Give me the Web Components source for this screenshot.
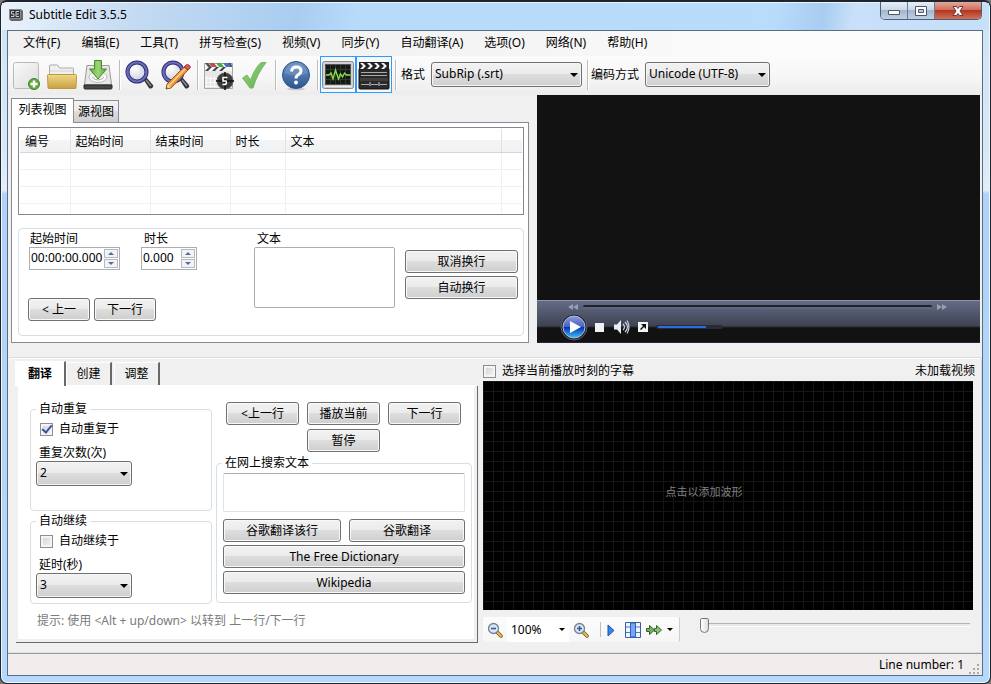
<!DOCTYPE html>
<html lang="zh-CN">
<head>
<meta charset="utf-8">
<title>Subtitle Edit 3.5.5</title>
<style>
*{box-sizing:border-box}
html{background:#777}
body{margin:0;min-height:100vh;display:flex;font:12px/16px "Noto Sans","Noto Sans CJK SC",sans-serif;color:#000}
se-window{flex:1}
.top{display:grid;grid-template-columns:minmax(0,518fr) minmax(0,443fr);column-gap:8px;padding:0 2px 14px 3px;height:262px}
.top se-tabs{margin-top:3px}
.bottom{flex:1;display:grid;grid-template-columns:minmax(0,463fr) minmax(0,490fr);column-gap:5px;padding:3px 8px 9px 7px;border:1px solid #d5dfe5;border-width:1px 1px 1px 0;border-radius:3px;box-shadow:inset 0 1px #fff}
.listpage{padding:4px 4px 6px 6px;display:flex;flex-direction:column;height:100%}
.listpage se-list{margin-bottom:13px}
.listpage se-group{flex:1}
.edit{display:grid;grid-template-columns:216px minmax(0,1fr) 113px;column-gap:10px;padding:2px 5px 14px 9px;height:100%}
.timing{display:flex;flex-direction:column;justify-content:space-between}
.spins{display:flex;gap:21px;padding-left:1px}
.spins se-spin:first-child{width:91px}
.spins se-spin:last-child{width:56px}
.pair{display:flex;gap:4px}
.pair se-button{width:62px}
.wraps{display:flex;flex-direction:column;gap:3px;padding-top:19px}
.translate{display:grid;grid-template-columns:182px minmax(0,1fr);column-gap:4px;padding:14px 2px 0 12px}
.auto{display:flex;flex-direction:column;gap:2px}
.auto se-group:first-child{height:110px}
.auto se-group:last-child{height:91px}
.opts{display:flex;flex-direction:column;padding:4px 5px}
.opts se-check{padding-left:4px;margin-bottom:8px}
.opts se-select{width:96px}
.play{display:grid;grid-template-columns:repeat(3,73px);column-gap:8px;row-gap:4px;padding:1px 0 0 10px;margin-bottom:3px}
.play se-button:last-child{grid-column:2}
.play,.web{min-width:0}
.web{display:grid;grid-template-columns:118fr 116fr;gap:3px 8px;padding:2px 6px 8px 6px}
.web se-memo{grid-column:1/-1;margin-bottom:4px}
.web .wide{grid-column:1/-1}
.hint{grid-column:1/-1;color:#7b7b7b;padding:9px 0 0 7px}
.wave{display:flex;flex-direction:column}
.wavehead{display:flex;justify-content:space-between;height:20px;align-items:center;margin-right:-2px}
.wave se-waveform{flex:1}
.waveside{display:flex;align-items:flex-start;height:33px;padding-top:7px}
</style>
</head>
<body>
<se-window caption="Subtitle Edit 3.5.5">
  <se-menu items="文件(F)|编辑(E)|工具(T)|拼写检查(S)|视频(V)|同步(Y)|自动翻译(A)|选项(O)|网络(N)|帮助(H)"></se-menu>
  <se-toolbar></se-toolbar>
  <div class="top">
    <se-tabs kind="framed" tabs="列表视图|源视图">
      <div class="listpage">
        <se-list columns="编号|起始时间|结束时间|时长|文本"></se-list>
        <se-group>
          <div class="edit">
            <div class="timing">
              <div class="spins">
                <se-spin label="起始时间" value="00:00:00.000"></se-spin>
                <se-spin label="时长" value="0.000"></se-spin>
              </div>
              <div class="pair"><se-button>&lt; 上一</se-button><se-button>下一行</se-button></div>
            </div>
            <se-memo label="文本" rows="3"></se-memo>
            <div class="wraps"><se-button>取消换行</se-button><se-button>自动换行</se-button></div>
          </div>
        </se-group>
      </div>
    </se-tabs>
    <se-player></se-player>
  </div>
  <div class="bottom">
    <se-tabs kind="raised" tabs="翻译|创建|调整">
      <div class="translate">
        <div class="auto">
          <se-group caption="自动重复"><div class="opts">
            <se-check label="自动重复于" checked></se-check>
            <se-select label="重复次数(次)" options="2" stacked></se-select>
          </div></se-group>
          <se-group caption="自动继续"><div class="opts">
            <se-check label="自动继续于"></se-check>
            <se-select label="延时(秒)" options="3" stacked></se-select>
          </div></se-group>
        </div>
        <div>
          <div class="play"><se-button>&lt;上一行</se-button><se-button>播放当前</se-button><se-button>下一行</se-button><se-button>暂停</se-button></div>
          <se-group caption="在网上搜索文本"><div class="web">
            <se-memo name="在网上搜索文本" light></se-memo>
            <se-button>谷歌翻译该行</se-button><se-button>谷歌翻译</se-button>
            <se-button class="wide">The Free Dictionary</se-button>
            <se-button class="wide">Wikipedia</se-button>
          </div></se-group>
        </div>
        <div class="hint">提示: 使用 &lt;Alt + up/down&gt; 以转到 上一行/下一行</div>
      </div>
    </se-tabs>
    <div class="wave">
      <div class="wavehead"><se-check label="选择当前播放时刻的字幕"></se-check><span>未加载视频</span></div>
      <se-waveform>点击以添加波形</se-waveform>
      <div class="waveside"><se-zoombar></se-zoombar><se-slider></se-slider></div>
    </div>
  </div>
  <se-status>Line number: 1</se-status>
</se-window>

<script>
const BASE = '*{box-sizing:border-box}button,input,select,textarea{font:inherit;color:inherit;margin:0}';
const define = (name, css, html) => customElements.define(name, class extends HTMLElement {
  constructor() { super(); this.attachShadow({ mode: 'open' }); }
  connectedCallback() {
    if (this.shadowRoot.childNodes.length) return;
    this.shadowRoot.innerHTML = `<style>${BASE}${css}</style>` + (typeof html === 'function' ? html(this) : html);
  }
});
const list = (el, name) => (el.getAttribute(name) || '').split('|');
const attr = (el, name) => el.getAttribute(name) || '';

const lens = `<defs><radialGradient id="l" cx=".4" cy=".35"><stop offset="0" stop-color="#fff"/><stop offset="1" stop-color="#d3dae4"/></radialGradient></defs>
<path d="M19 20l3-2 7 8q1 2-1 3t-3 0z" fill="#353539"/><path d="M22 21l5 6" stroke="#8a8a92" stroke-width="1.500"/>
<circle cx="13" cy="13" r="9.500" fill="url(#l)" stroke="#2c2c6c" stroke-width="4"/><circle cx="13" cy="13" r="9.500" fill="none" stroke="#6a6abf" stroke-width="2.200"/><path d="M7 12q1-5 6-5" fill="none" stroke="#fff" stroke-width="2"/>`;
const smallLens = sign => `<path d="M10 10l4 4" stroke="#715414" stroke-width="3.5" stroke-linecap="round"/><path d="M10.500 10.500l3.500 3.500" stroke="#efbf4e" stroke-width="2" stroke-linecap="round"/><circle cx="6.500" cy="6.500" r="5" fill="#d3e7fd" stroke="#788190" stroke-width="1.300"/><path d="${sign}" stroke="#40598e" stroke-width="1.600"/>`;
const ICONS = {
  app: [16, `<path d="M1 2h12l2 2v9l-3 1H3l-2-2z" fill="#66676b"/><path d="M1.500 2.500h11v9h-11z" fill="#34353a" stroke="#8a8a8a"/><path d="M6 4.500H3.500V7H6v2.500H3M11 4.500H8v5h3M8 7h3" fill="none" stroke="#ccc"/>`],
  new: [32, `<defs><linearGradient id="g" x1="0" y1="0" x2="1" y2="1"><stop offset="0" stop-color="#fafafa"/><stop offset="1" stop-color="#dcdcdc"/></linearGradient></defs>
   <rect x="3.500" y="3.500" width="25" height="26" rx="2" fill="url(#g)" stroke="#b9b9b9"/><circle cx="24" cy="25" r="5.500" fill="#62aa3e" stroke="#3f842b"/><path d="M24 21.500v7M20.500 25h7" stroke="#fff" stroke-width="2.500"/>`],
  open: [32, `<defs><linearGradient id="g" x1="0" y1="0" x2="0" y2="1"><stop offset="0" stop-color="#f0d988"/><stop offset="1" stop-color="#c9a040"/></linearGradient></defs>
   <path d="M3.500 29V7q0-1 1-1h7l2 3h13q1 0 1 1v19z" fill="#f0f0f0" stroke="#aaa"/><path d="M4 12h23" stroke="#d4d4d4"/><path d="M1.500 16.500q0-1 1-1h27q1 0 1 1L30 28.500q0 1-1 1H3q-1 0-1-1z" fill="url(#g)" stroke="#bd9741"/>`],
  save: [32, `<defs><linearGradient id="g" x1="0" y1="0" x2="1" y2="0"><stop offset="0" stop-color="#62ad44"/><stop offset=".5" stop-color="#9ad573"/><stop offset="1" stop-color="#62ad44"/></linearGradient></defs>
   <path d="M5 6.500h22l2.500 19h-27z" fill="#e8e8e8" stroke="#9a9a9a"/><path d="M2 26h28v3q0 1-1 1H3q-1 0-1-1z" fill="#44474a" stroke="#28292b"/><ellipse cx="16" cy="18" rx="9" ry="5.500" fill="#f8f8f8" stroke="#bbb"/><path d="M10 18q6 6 12 0" fill="none" stroke="#aaa"/><path d="M12.500 1.500h7V10h5L16 20 7.500 10h5z" fill="url(#g)" stroke="#438a2c"/>`],
  find: [32, lens],
  replace: [32, lens + `<path d="M24 8l4 3L11 29l-5 1 1-5z" fill="#ee963a" stroke="#9d5a1c"/><path d="M9.500 26L25.500 9.500" stroke="#ffd48e" stroke-width="1.500"/><path d="M24 8l2-2q2-1 3.500.500T30 9l-2 2z" fill="#d95a5a" stroke="#a33"/><path d="M8 25l3 3-5 2z" fill="#eed7ab"/><path d="M6 30l.700-2 1.200 1.300z" fill="#222"/>`],
  fix: [32, `<path d="M2.500 4.500h28v25h-28z" fill="#e6e6e6" stroke="#a6a6a6"/><path d="M3 5h27v7H3z" fill="#f5f5f5"/><path d="M3 4h3l4 4H6zM25 4h4l1 3v1h-2z" fill="#555"/><path d="M7 4h5l3 4h-5z" fill="#c44950"/><path d="M14 4h5l3 4h-5z" fill="#4aa34d"/><path d="M21 4h5l3 4h-5z" fill="#486fc4"/><path d="M3 12l4-4h3l-4 4zM10 12l4-4h3l-4 4zM17 12l4-4h3l-4 4z" fill="#444"/>
   <path d="M4.500 17v11M8.500 17v11M12.500 17v11M3 19.500h12M3 23.500h12M3 27.500h12" stroke="#fafafa"/><circle cx="23" cy="22" r="8" fill="#3b3b3b" stroke="#5c5c5c"/><path d="M23 13v18M14 22h18" stroke="#111" stroke-width="1.500"/><path d="M25.500 18.500H21V22h3q2 4-3.500 3.500" fill="none" stroke="#fff" stroke-width="1.500"/>`],
  check: [32, `<defs><linearGradient id="g" x1="0" y1="0" x2="1" y2="1"><stop offset="0" stop-color="#9dd58a"/><stop offset="1" stop-color="#60ac4b"/></linearGradient></defs><path d="M4.500 19l4.500-3 3.500 5Q17 9 23 3.500h5Q19 15 15 29h-3z" fill="url(#g)" stroke="#73b860"/>`],
  help: [32, `<defs><linearGradient id="g" x1="0" y1="0" x2="0" y2="1"><stop offset="0" stop-color="#6f96c8"/><stop offset="1" stop-color="#2a5691"/></linearGradient></defs><ellipse cx="16" cy="30" rx="9" ry="1.500" fill="#000" opacity=".15"/><circle cx="16" cy="16" r="13.500" fill="url(#g)" stroke="#2c5285"/><path d="M4 14a12.500 12.500 0 0 1 24 0q-12 6-24 0" fill="#fff" opacity=".12"/><path d="M11.500 12.500Q12 8 16.500 8t4.500 4q0 2-2.500 3.500T16 19.500" fill="none" stroke="#fff" stroke-width="3"/><circle cx="16" cy="23.500" r="2" fill="#fff"/>`],
  wave: [32, `<rect x=".5" y="2.500" width="31" height="27" rx="2" fill="#d0d0d0" stroke="#8a8a8a"/><rect x="3.500" y="5.500" width="25" height="20" fill="#151915" stroke="#555"/><path d="M8.500 6v19M13.500 6v19M18.500 6v19M23.500 6v19M4 10.500h24M4 15.500h24M4 20.500h24" stroke="#303a2c"/><path d="M4 16h3l2-2 2 6 2.500-9 3 9 2-5 2 3 2-4 2 2h4" fill="none" stroke="#8be04a" stroke-width="1.300"/><path d="M2 27.500h28" stroke="#efefef"/>`],
  clap: [32, `<path d="M1 10h30v19q0 1-1 1H2q-1 0-1-1z" fill="#2a2a2a" stroke="#111"/><path d="M1 3h30v8H1z" fill="#222"/><path d="M2 4h3l3 3H5zM9 4h3l3 3h-3zM16 4h3l3 3h-3zM23 4h3l3 3h-3zM5 7h3l-3 3H2zM12 7h3l-3 3H9zM19 7h3l-3 3h-3zM26 7h3l-3 3h-3z" fill="#eee"/><path d="M3 13.500h26M3 16.500h26M3 25.500h8M13 25.500h7M22 25.500h7" stroke="#aaa"/><path d="M12 23v4M21 23v4" stroke="#ccc"/><path d="M2 19h28v3H2z" fill="#fff" opacity=".1"/>`],
  zoomout: [16, smallLens('M4 6.500h5')],
  zoomin: [16, smallLens('M4 6.500h5M6.500 4v5')],
  play: [16, `<path d="M5 3l6 5.500L5 14z" fill="#3a86e6" stroke="#1a53b5"/>`],
  columns: [16, `<path d="M.5.5h15v15H.5z" fill="#eef4fd" stroke="#3f5f9e"/><path d="M1 5h14M1 10.500h14" stroke="#5676b8"/><path d="M5.500 1h5v14h-5z" fill="#75a8f3" stroke="#2f62bd"/>`],
  ff: [16, `<path d="M.5 6.500h3v-3L8.500 8l-5 4.500v-3h-3z" fill="#72b05b" stroke="#36632b"/><path d="M8.500 6.500h2v-3L15.500 8l-5 4.500v-3h-2z" fill="#8ac573" stroke="#36632b"/>`],
  rewind: [10, `<path d="M5 2v6L0 5zM10 2v6L5 5z" fill="#98a0b1"/>`],
  forward: [10, `<path d="M0 2v6l5-3zM5 2v6l5-3z" fill="#98a0b1"/>`],
  orb: [28, `<defs><linearGradient id="g" x1="0" y1="0" x2="0" y2="1"><stop offset="0" stop-color="#8d9bda"/><stop offset=".49" stop-color="#4560c4"/><stop offset=".5" stop-color="#0a2ca8"/><stop offset="1" stop-color="#35c6ff"/></linearGradient></defs><circle cx="14" cy="14" r="13" fill="#1c202a" stroke="#59606f"/><circle cx="14" cy="14" r="11" fill="url(#g)" stroke="#b2bbdf"/><path d="M10 8l11 6-11 6z" fill="#fff"/>`],
  sound: [16, `<path d="M0 5.500h3l4-4.500v14l-4-4.500H0z" fill="#e9edf4"/><path d="M9 5q3 3 0 6M11 3q5 5 0 10M13 1.500q4 6.500 0 13" fill="none" stroke="#ccd3df" stroke-width="1.200"/>`],
  full: [10, `<path d="M0 0h10v10H0z" fill="#f4f4f4"/><path d="M3 2h5v5L6 5 3 8 2 7l3-3z" fill="#111"/>`],
  min: [14, `<path d="M1.500 6.500h11v4h-11z" fill="#fff" stroke="#4c5669"/>`],
  max: [14, `<path d="M1.500 2.500h11v9h-11z" fill="#fff" stroke="#4c5669"/><path d="M4.500 5.500h5v3h-5z" fill="#b8cce3" stroke="#4c5669"/>`],
  close: [14, `<path d="M2 2.500h3.500L7 4.500l1.500-2H12L9 7l3 4.500H8.500L7 9.500l-1.500 2H2L5 7z" fill="#fff" stroke="#6c3a3a"/>`],
};
define('se-icon', ':host{display:inline-flex;flex:none}svg{display:block}', el => {
  const [size, body] = ICONS[attr(el, 'name')];
  return `<svg width="${size}" height="${size}" viewBox="0 0 ${size} ${size}" aria-hidden="true">${body}</svg>`;
});

define('se-window', `
:host{display:flex;flex-direction:column;min-height:100vh;border-radius:7px;border:1px solid #20242d;border-top-width:2px;padding:0 7px 7px;
 background:linear-gradient(#cfe3f6 0,#d8e8f7 150px,#e2eefa 188px,#afd2f8 192px,#b5d8fc 100%);box-shadow:inset 0 0 0 1px #eaf7ff}
header{display:flex;height:27px;align-items:flex-start;background:linear-gradient(100deg,#eaf3fc 0,#c3daf2 14%,#a9cdf1 30%,#b8dafb 36%,#b9dcfd 78%,#a8cdf0 83%,#c8e0fa 86%,#c6e0fa 100%);margin:1px -6px 0;padding:0 7px 0 6px}
header se-icon{margin:4px 5px 0 0}
h1{font:inherit;margin:4px 0 0;flex:1}
.ctl{display:flex;border:1px solid #4f5f75;border-top:0;border-radius:0 0 5px 5px;overflow:hidden;height:18px;margin-top:-1px}
.ctl se-icon{margin:0}
.ctl button{width:27px;padding:0;border:0;border-right:1px solid #6b7b90;display:flex;align-items:center;justify-content:center;background:linear-gradient(#e4eef8,#cbd9e8 45%,#a4b6cb 50%,#bed2e6)}
.ctl button.x{width:46px;border:0;background:linear-gradient(#e2a99c,#d0705c 45%,#b5351e 50%,#d1715a)}
main{flex:1;display:flex;flex-direction:column;border:1px solid #5b6e80;background:#f0f0f0;margin:0 0 0 -1px}`,
el => `<header><se-icon name="app"></se-icon><h1>${attr(el, 'caption')}</h1><div class="ctl"><button aria-label="最小化"><se-icon name="min"></se-icon></button><button aria-label="最大化"><se-icon name="max"></se-icon></button><button class="x" aria-label="关闭"><se-icon name="close"></se-icon></button></div></header><main><slot></slot></main>`);

define('se-menu', `:host{display:block;background:linear-gradient(90deg,#f0f0f0,#f4f4f4 50%,#fcfcfc 80%)}
nav{display:flex;height:25px;padding:0 5px;gap:1px}button{border:0;background:none;padding:0 10px 2px;white-space:nowrap}`,
el => `<nav>${list(el, 'items').map(t => `<button>${t}</button>`).join('')}</nav>`);

define('se-select', `:host{display:inline-block}
div{display:flex;align-items:center;gap:6px}
:host([stacked]) div{display:block}:host([stacked]) label{display:block;padding-left:3px}
span{position:relative;display:block;flex:1}
span::after{content:"";position:absolute;right:4px;top:11px;border:4px solid transparent;border-top-color:#000;border-bottom:0;pointer-events:none}
select{appearance:none;display:block;width:100%;height:25px;border:1px solid #707070;border-radius:3px;padding:0 16px 1px 3px;background:linear-gradient(#f2f2f2,#ebebeb 48%,#dddddd 50%,#cfcfcf);box-shadow:inset 0 0 0 1px #f6f6f6}`,
el => `<div><label for="s">${attr(el, 'label')}</label><span><select id="s">${list(el, 'options').map(o => `<option>${o}</option>`).join('')}</select></span></div>`);

define('se-toolbar', `:host{display:flex;align-items:center;height:39px;padding-bottom:2px;background:linear-gradient(#fbfbfb,#f7f7f7 50%,#ececec)}
button{width:36px;height:37px;padding:0;border:0;background:none;display:flex;align-items:center;justify-content:center}
button[aria-pressed=true]{border:1px solid #3399ff;background:#f5f8fb}
i{width:1px;height:30px;background:#bdbdbd;box-shadow:1px 0 #fff;margin:0 2px 0 3px}
.a{width:181px;margin:0 2px 0 3px}.b{width:179px;margin-left:1px}`,
() => {
  const b = (n, t, p = '') => `<button aria-label="${t}" ${p}><se-icon name="${n}"></se-icon></button>`;
  return b('new', '新建') + b('open', '打开') + b('save', '保存') + '<i></i>' + b('find', '查找') + b('replace', '替换') + '<i></i>' + b('fix', '同步') + b('check', '检查') + '<i></i>' + b('help', '帮助') + '<i></i>' + b('wave', '波形', 'aria-pressed="true"') + b('clap', '视频', 'aria-pressed="true"') +
  '<i></i><se-select class="a" label="格式" options="SubRip (.srt)"></se-select><i></i><se-select class="b" label="编码方式" options="Unicode (UTF-8)"></se-select>';
});

define('se-tabs', `:host{display:flex;flex-direction:column;min-width:0}
[role=tablist]{display:flex;align-items:flex-end;position:relative}
button{border:0;padding:0;white-space:nowrap}
section{flex:1;background:#fff;min-width:0}
.framed button{height:22px;width:45px;border:1px solid #898c95;border-bottom:0;border-left:0;background:linear-gradient(#f2f2f2,#ebebeb 48%,#dddddd 50%,#cfcfcf)}
.framed button:first-child{height:25px;width:63px;background:#fff;border-left:1px solid #898c95;margin-bottom:-1px;padding-bottom:2px}
section.framed{border:1px solid #898c95}
.raised button{height:23px;width:46px;margin-right:2px;background:#f0f0f0;border:1px solid #fff;border-right:2px solid #696969;border-bottom:0}
.raised button:first-child{height:25px;width:51px;background:#fff;margin:0 0 -1px;font-weight:bold}
section.raised{border:3px solid #f0f0f0;border-top:2px solid #fff;box-shadow:1px 1px #696969,inset -1px -1px #fff;margin:0 1px 1px 0}`,
el => { const k = attr(el, 'kind'); return `<div role="tablist" class="${k}">${list(el, 'tabs').map((t, i) => `<button role="tab" aria-selected="${!i}">${t}</button>`).join('')}</div><section role="tabpanel" class="${k}"><slot></slot></section>`; });

define('se-list', `:host{display:block;border:1px solid #828790;height:88px;padding:1px 1px 2px;background:#fff;overflow:hidden}
table{width:100%;border-collapse:collapse;table-layout:fixed}
th{height:23px;font-weight:normal;text-align:left;padding:3px 0 0 5px;background:linear-gradient(#fff 45%,#f3f4f6 50%,#eff1f3);border-right:1px solid #e0e3e6;border-bottom:1px solid #d5d5d5;line-height:16px}
td{height:17px;padding:0;border-right:1px solid #f0f0f0;border-bottom:1px solid #f0f0f0}
th:last-child,td:last-child{border-right:0}`,
el => { const w = [50, 80, 80, 55, 216, 0]; const c = list(el, 'columns');
  return `<table><colgroup>${w.map(x => x ? `<col style="width:${x}px">` : '<col>').join('')}</colgroup><thead><tr>${w.map((_, i) => `<th>${c[i] || ''}</th>`).join('')}</tr></thead><tbody>${('<tr>' + '<td></td>'.repeat(6) + '</tr>').repeat(4)}</tbody></table>`; });

define('se-group', `:host{display:block;min-width:0}
fieldset{margin:0;border:1px solid #d5dfe5;border-radius:4px;padding:0;min-width:0;height:100%}
legend{padding:0 3px;margin-left:5px;line-height:16px}`,
el => `<fieldset>${el.hasAttribute('caption') ? `<legend>${attr(el, 'caption')}</legend>` : ''}<slot></slot></fieldset>`);

define('se-button', `:host{display:block;min-width:0}
button{width:100%;height:23px;padding:0;border:1px solid #707070;border-radius:3px;white-space:nowrap;line-height:16px;background:linear-gradient(#f2f2f2,#ebebeb 48%,#dddddd 50%,#cfcfcf);box-shadow:inset 0 0 0 1px #f8f8f8}`,
'<button><slot></slot></button>');

define('se-check', `:host{display:block}label{display:flex;align-items:center;gap:6px;white-space:nowrap}
input{appearance:none;width:13px;height:13px;border:1px solid #8e8f8f;background:linear-gradient(135deg,#cdd1d6,#f6f6f6);box-shadow:inset 0 0 0 2px #f4f4f4;display:grid;place-items:center}
input:checked::after{content:"";width:4px;height:8px;border:solid #3f55a3;border-width:0 2px 2px 0;transform:rotate(40deg);margin-top:-3px}`,
el => `<label><input type="checkbox" ${el.hasAttribute('checked') ? 'checked' : ''}>${attr(el, 'label')}</label>`);

define('se-spin', `:host{display:block}label{display:block;padding-left:1px}:host(:last-child) label{padding-left:3px}
div{display:flex;height:23px;border:1px solid #abadb3;background:#fff}
input{flex:1;min-width:0;width:0;border:0;padding:0 0 2px 1px;background:none}
span{display:grid;grid-template-rows:9px 9px;gap:1px;padding:1px 1px 1px 0}
button{width:14px;padding:0;border:1px solid #b5b8bd;background:#f2f3f5;display:grid;place-items:center}
b{border:3px solid transparent}.u b{border-bottom-color:#5669a5;border-top:0}.d b{border-top-color:#5669a5;border-bottom:0}`,
el => `<label for="i">${attr(el, 'label')}</label><div><input id="i" value="${attr(el, 'value')}"><span><button class="u" aria-label="增加"><b></b></button><button class="d" aria-label="减少"><b></b></button></span></div>`);

define('se-memo', `:host{display:block;min-width:0}label{display:block;padding-left:3px}
textarea{display:block;width:100%;height:61px;resize:none;border:1px solid #abadb3;border-radius:2px;background:#fff;padding:3px}
:host([light]) textarea{height:39px;border-color:#abadb3 #e2e3ea #e2e3ea}`,
el => (el.hasAttribute('label') ? `<label for="t">${attr(el, 'label')}</label>` : '') + `<textarea id="t" aria-label="${attr(el, 'label') || attr(el, 'name')}"></textarea>`);

define('se-player', `:host{display:flex;flex-direction:column;min-width:0;background:#121212;color:#fff}
.screen{flex:1}
.bar{height:43px;padding-top:1px;border-top:1px solid #8f94a6;border-bottom:1px solid #22264f;background:linear-gradient(#646b86,#3d4352 25px,#22262c 26px,#121212 27px)}
.seek{display:flex;align-items:center;height:10px;gap:5px;padding:0 33px 0 31px}
.seek input{flex:1;min-width:0}
.row{display:flex;align-items:center;height:30px;padding-left:23px}
button{border:0;background:none;padding:0;display:flex}
input{appearance:none;height:4px;background:linear-gradient(#1e222c 50%,#5f677b 50%);border-radius:2px}
input::-webkit-slider-thumb{appearance:none;width:1px;height:1px}
.stop{width:9px;height:9px;background:#f0f1f5;margin:0 10px 0 7px}
.full{margin:0 8px}.vol{width:67px;background:linear-gradient(90deg,transparent 2px,#2c6be8 2px 50px,transparent 50px) 0 1px/100% 2px no-repeat,#282c36;border:0}`,
`<div class="screen"></div><div class="bar"><div class="seek"><button aria-label="后退"><se-icon name="rewind"></se-icon></button><input type="range" value="0" aria-label="进度"><button aria-label="前进"><se-icon name="forward"></se-icon></button></div>
<div class="row"><button aria-label="播放"><se-icon name="orb"></se-icon></button><button class="stop" aria-label="停止"></button><button aria-label="静音"><se-icon name="sound"></se-icon></button><button class="full" aria-label="全屏"><se-icon name="full"></se-icon></button><input class="vol" type="range" value="72" aria-label="音量"></div></div>`);

define('se-waveform', `:host{display:flex;align-items:center;justify-content:center;color:#808080;font-size:11px;padding-right:48px;padding-bottom:8px;
background:linear-gradient(90deg,#151515 1px,transparent 1px) 0 0/10px 10px,linear-gradient(#151515 1px,transparent 1px) 0 0/10px 10px,#000}`, '<slot></slot>');

define('se-zoombar', `:host{display:flex;align-items:center;width:197px;height:25px;background:linear-gradient(#fcfcfc,#f6f6f6);border-right:1px solid #ccc;border-radius:2px;padding-left:4px}
button{border:0;padding:0;background:none;display:flex}
.z{position:relative;margin:0 4px;background:#fff}
select{appearance:none;display:block;border:0;background:#fff;width:62px;height:25px;padding:0 0 0 4px}
.z::after,.more::after{content:"";border:3px solid transparent;border-top-color:#000;border-bottom:0}
.z::after{position:absolute;right:4px;top:11px;pointer-events:none}
.more{align-items:center;gap:5px;margin-left:5px}
i{width:1px;height:15px;background:#bdbdbd;margin:0 2px 0 11px}
.c{margin-left:6px}`,
`<button aria-label="缩小"><se-icon name="zoomout"></se-icon></button><span class="z"><select aria-label="缩放"><option>100%</option></select></span><button aria-label="放大"><se-icon name="zoomin"></se-icon></button><i></i><button aria-label="播放"><se-icon name="play"></se-icon></button><button class="c" aria-label="居中"><se-icon name="columns"></se-icon></button><button class="more" aria-label="播放速度"><se-icon name="ff"></se-icon></button>`);

define('se-slider', `:host{display:block;flex:1;padding:0 3px 0 20px}
input{appearance:none;display:block;width:100%;height:16px;background:linear-gradient(#b2b2b2 1px,#e7eaea 1px 3px,#fff 3px) 0 6px/100% 4px no-repeat}
input::-webkit-slider-thumb{appearance:none;width:9px;height:15px;border:1px solid #777;border-radius:2px 2px 5px 5px;background:linear-gradient(90deg,#fff,#ddd)}`,
'<input type="range" value="0" aria-label="位置">');

define('se-status', `:host{display:flex;align-items:center;justify-content:flex-end;height:22px;background:#f1edec;border-top:1px solid #9b9b9b;padding-right:2px;gap:5px}
svg{align-self:flex-end}`,
`<slot></slot><svg width="11" height="11" aria-hidden="true"><path d="M8 0h2v2H8zM8 4h2v2H8zM8 8h2v2H8zM4 4h2v2H4zM4 8h2v2H4zM0 8h2v2H0z" fill="#aaa"/></svg>`);
</script>
</body>
</html>
